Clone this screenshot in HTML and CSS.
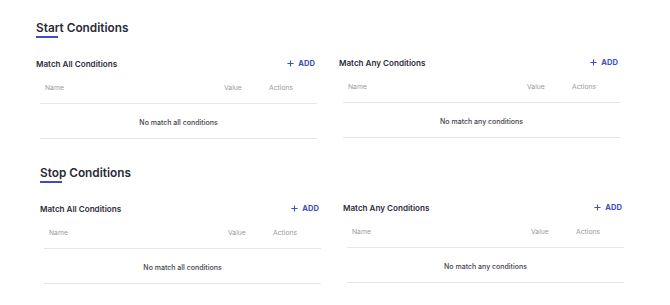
FILE: index.html
```html
<!DOCTYPE html>
<html lang="en">
<head>
<meta charset="utf-8">
<title>Conditions</title>
<link rel="stylesheet" href="styles.css">
</head>
<body>
<div class="page">
  <section class="section">
    <h2 class="section-title">Start Conditions</h2>
    <div class="grid">
      <div class="panel">
        <div class="panel-head">
          <span class="panel-title">Match All Conditions</span>
          <button class="add-btn" type="button"><svg class="plus" viewBox="0 0 8 8" width="7" height="7"><path d="M4 0.5V7.5M0.5 4H7.5" stroke="currentColor" stroke-width="1.2" fill="none"/></svg>ADD</button>
        </div>
        <div class="table">
          <div class="thead"><span class="c-name">Name</span><span class="c-value">Value</span><span class="c-actions">Actions</span></div>
          <div class="empty">No match all conditions</div>
        </div>
      </div>
      <div class="panel panel-right">
        <div class="panel-head">
          <span class="panel-title">Match Any Conditions</span>
          <button class="add-btn" type="button"><svg class="plus" viewBox="0 0 8 8" width="7" height="7"><path d="M4 0.5V7.5M0.5 4H7.5" stroke="currentColor" stroke-width="1.2" fill="none"/></svg>ADD</button>
        </div>
        <div class="table">
          <div class="thead"><span class="c-name">Name</span><span class="c-value">Value</span><span class="c-actions">Actions</span></div>
          <div class="empty">No match any conditions</div>
        </div>
      </div>
    </div>
  </section>
  <section class="section section-stop">
    <h2 class="section-title">Stop Conditions</h2>
    <div class="grid">
      <div class="panel">
        <div class="panel-head">
          <span class="panel-title">Match All Conditions</span>
          <button class="add-btn" type="button"><svg class="plus" viewBox="0 0 8 8" width="7" height="7"><path d="M4 0.5V7.5M0.5 4H7.5" stroke="currentColor" stroke-width="1.2" fill="none"/></svg>ADD</button>
        </div>
        <div class="table">
          <div class="thead"><span class="c-name">Name</span><span class="c-value">Value</span><span class="c-actions">Actions</span></div>
          <div class="empty">No match all conditions</div>
        </div>
      </div>
      <div class="panel panel-right">
        <div class="panel-head">
          <span class="panel-title">Match Any Conditions</span>
          <button class="add-btn" type="button"><svg class="plus" viewBox="0 0 8 8" width="7" height="7"><path d="M4 0.5V7.5M0.5 4H7.5" stroke="currentColor" stroke-width="1.2" fill="none"/></svg>ADD</button>
        </div>
        <div class="table">
          <div class="thead"><span class="c-name">Name</span><span class="c-value">Value</span><span class="c-actions">Actions</span></div>
          <div class="empty">No match any conditions</div>
        </div>
      </div>
    </div>
  </section>
</div>
</body>
</html>
```

FILE: styles.css
```css
* { box-sizing: border-box; }
html, body { margin: 0; padding: 0; background: #fff; }
body {
  font-family: Inter, "Open Sans", "Liberation Sans", sans-serif;
  color: #2c2c3a;
}
.page { width: 670px; }
.section {
  padding: 20px 0 0 36px;
  height: 145px;
}
.section-stop { padding-left: 40px; height: 160px; }
.section-title {
  margin: 0;
  font-size: 11.8px;
  line-height: 16px;
  font-weight: 600;
  color: #2a2a38;
}
.section-title::after {
  content: "";
  display: block;
  width: 22px;
  height: 2px;
  background: #3d4fc0;
}
.grid {
  display: grid;
  grid-template-columns: 283px 283px;
  column-gap: 20px;
  margin-top: 15px;
}
.panel-right { margin-top: -1px; }
.panel-head {
  display: flex;
  align-items: center;
  justify-content: space-between;
  height: 20px;
  padding: 1px 4px 0 0;
}
.panel-title {
  font-size: 8.1px;
  font-weight: 600;
  color: #2c2c3a;
}
.add-btn {
  display: flex;
  align-items: center;
  gap: 4px;
  border: 0;
  background: none;
  padding: 0;
  font-family: inherit;
  font-size: 7.6px;
  font-weight: 700;
  color: #3d4fc0;
}
.plus { display: block; }
.table { margin-left: 4px; width: 277px; }
.thead {
  display: flex;
  align-items: flex-start;
  height: 31px;
  padding: 10px 0 0 5px;
  border-bottom: 1px solid #e6e6e6;
  font-size: 6.8px;
  color: #9a9a9a;
}
.c-name { flex: 1; }
.c-value { width: 45px; }
.c-actions { width: 48px; }
.empty {
  height: 35px;
  display: flex;
  align-items: center;
  justify-content: center;
  padding-top: 2px;
  border-bottom: 1px solid #e6e6e6;
  font-size: 7px;
  font-weight: 500;
  color: #44444f;
}
```
